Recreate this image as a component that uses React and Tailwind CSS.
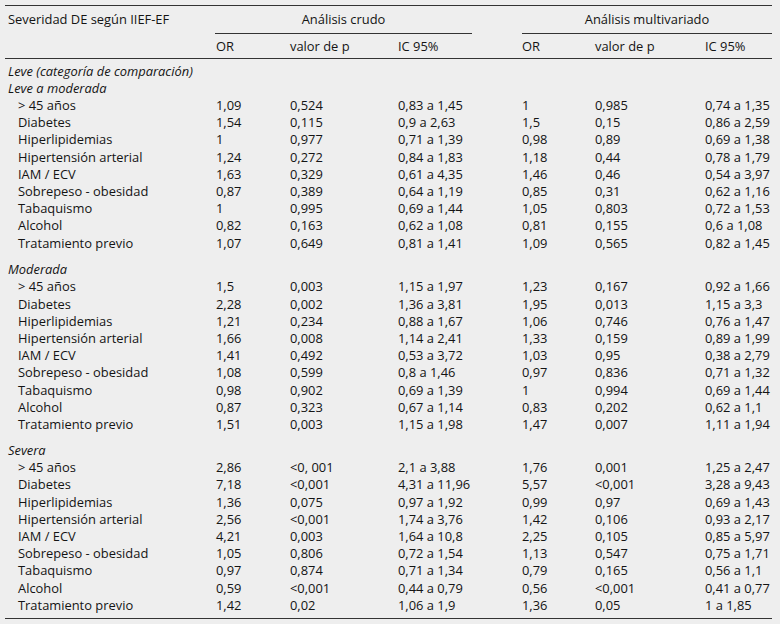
import React from "react";

// column widths: label, OR, p, IC | OR, p, IC
const cols = "grid grid-cols-[208px_74px_108px_124px_73px_110px_70px]";

const sections = [
  {
    title: "Leve a moderada",
    rows: [
      ["> 45 años", "1,09", "0,524", "0,83 a 1,45", "1", "0,985", "0,74 a 1,35"],
      ["Diabetes", "1,54", "0,115", "0,9 a 2,63", "1,5", "0,15", "0,86 a 2,59"],
      ["Hiperlipidemias", "1", "0,977", "0,71 a 1,39", "0,98", "0,89", "0,69 a 1,38"],
      ["Hipertensión arterial", "1,24", "0,272", "0,84 a 1,83", "1,18", "0,44", "0,78 a 1,79"],
      ["IAM / ECV", "1,63", "0,329", "0,61 a 4,35", "1,46", "0,46", "0,54 a 3,97"],
      ["Sobrepeso - obesidad", "0,87", "0,389", "0,64 a 1,19", "0,85", "0,31", "0,62 a 1,16"],
      ["Tabaquismo", "1", "0,995", "0,69 a 1,44", "1,05", "0,803", "0,72 a 1,53"],
      ["Alcohol", "0,82", "0,163", "0,62 a 1,08", "0,81", "0,155", "0,6 a 1,08"],
      ["Tratamiento previo", "1,07", "0,649", "0,81 a 1,41", "1,09", "0,565", "0,82 a 1,45"],
    ],
  },
  {
    title: "Moderada",
    rows: [
      ["> 45 años", "1,5", "0,003", "1,15 a 1,97", "1,23", "0,167", "0,92 a 1,66"],
      ["Diabetes", "2,28", "0,002", "1,36 a 3,81", "1,95", "0,013", "1,15 a 3,3"],
      ["Hiperlipidemias", "1,21", "0,234", "0,88 a 1,67", "1,06", "0,746", "0,76 a 1,47"],
      ["Hipertensión arterial", "1,66", "0,008", "1,14 a 2,41", "1,33", "0,159", "0,89 a 1,99"],
      ["IAM / ECV", "1,41", "0,492", "0,53 a 3,72", "1,03", "0,95", "0,38 a 2,79"],
      ["Sobrepeso - obesidad", "1,08", "0,599", "0,8 a 1,46", "0,97", "0,836", "0,71 a 1,32"],
      ["Tabaquismo", "0,98", "0,902", "0,69 a 1,39", "1", "0,994", "0,69 a 1,44"],
      ["Alcohol", "0,87", "0,323", "0,67 a 1,14", "0,83", "0,202", "0,62 a 1,1"],
      ["Tratamiento previo", "1,51", "0,003", "1,15 a 1,98", "1,47", "0,007", "1,11 a 1,94"],
    ],
  },
  {
    title: "Severa",
    rows: [
      ["> 45 años", "2,86", "<0, 001", "2,1 a 3,88", "1,76", "0,001", "1,25 a 2,47"],
      ["Diabetes", "7,18", "<0,001", "4,31 a 11,96", "5,57", "<0,001", "3,28 a 9,43"],
      ["Hiperlipidemias", "1,36", "0,075", "0,97 a 1,92", "0,99", "0,97", "0,69 a 1,43"],
      ["Hipertensión arterial", "2,56", "<0,001", "1,74 a 3,76", "1,42", "0,106", "0,93 a 2,17"],
      ["IAM / ECV", "4,21", "0,003", "1,64 a 10,8", "2,25", "0,105", "0,85 a 5,97"],
      ["Sobrepeso - obesidad", "1,05", "0,806", "0,72 a 1,54", "1,13", "0,547", "0,75 a 1,71"],
      ["Tabaquismo", "0,97", "0,874", "0,71 a 1,34", "0,79", "0,165", "0,56 a 1,1"],
      ["Alcohol", "0,59", "<0,001", "0,44 a 0,79", "0,56", "<0,001", "0,41 a 0,77"],
      ["Tratamiento previo", "1,42", "0,02", "1,06 a 1,9", "1,36", "0,05", "1 a 1,85"],
    ],
  },
];

function TitleRow({ children }) {
  return (
    <div className="flex h-[17.2px] items-center pl-[3px] italic">{children}</div>
  );
}

function DataRow({ row }) {
  return (
    <div className={`${cols} h-[17.2px] items-center`}>
      {row.map((cell, i) => (
        <div key={i} className={i === 0 ? "pl-[13px]" : "pl-[3px]"}>
          {cell}
        </div>
      ))}
    </div>
  );
}

export default function App() {
  return (
    <div className="min-h-[624px] bg-[#eeeeee] pt-[5px] font-['Open_Sans',sans-serif] text-[12.9px] leading-none text-[#141414]">
      <div className="ml-[5px] w-[767px]">
        <div className="h-px bg-[#333333]" />

        {/* header row 1 */}
        <div className="grid grid-cols-[208px_306px_253px]">
          <div className="flex h-[27px] items-center pl-[3px]">Severidad DE según IIEF-EF</div>
          <div className="flex flex-col">
            <div className="flex h-[27px] items-center justify-center pr-[45px]">Análisis crudo</div>
            <div className="ml-[2px] mr-[47px] h-px bg-[#333333]" />
          </div>
          <div className="flex flex-col">
            <div className="flex h-[27px] items-center justify-center pl-[3px]">Análisis multivariado</div>
            <div className="ml-[3px] h-px bg-[#333333]" />
          </div>
        </div>

        {/* header row 2 */}
        <div className={`${cols} h-[24px] items-center`}>
          <div />
          <div className="pl-[3px]">OR</div>
          <div className="pl-[3px]">valor de p</div>
          <div className="pl-[3px]">IC 95%</div>
          <div className="pl-[3px]">OR</div>
          <div className="pl-[3px]">valor de p</div>
          <div className="pl-[3px]">IC 95%</div>
        </div>
        <div className="h-px bg-[#333333]" />

        {/* body */}
        <div className="pt-[3.5px] pb-[3.8px]">
          <TitleRow>Leve (categoría de comparación)</TitleRow>
          {sections.map((s, si) => (
            <div key={s.title} className={si === 1 ? "mt-[9.5px]" : si === 2 ? "mt-[9px]" : ""}>
              <TitleRow>{s.title}</TitleRow>
              {s.rows.map((r, ri) => (
                <DataRow key={ri} row={r} />
              ))}
            </div>
          ))}
        </div>
        <div className="h-px bg-[#333333]" />
      </div>
    </div>
  );
}
